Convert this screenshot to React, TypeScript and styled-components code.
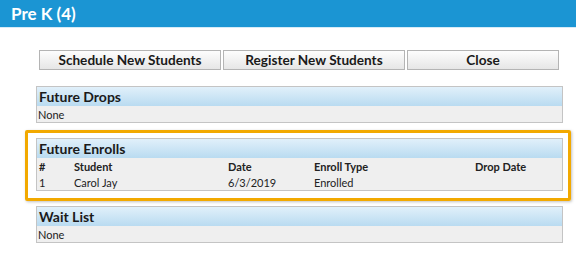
import React from "react";
import styled, { createGlobalStyle } from "styled-components";

const GlobalStyle = createGlobalStyle`
  body {
    margin: 0;
    background: #ffffff;
    font-family: Lato, "Open Sans", Arial, sans-serif;
    color: #222;
  }
`;

const Page = styled.div`
  width: 576px;
  height: 253px;
  overflow: hidden;
  background: #fff;
`;

const TitleBar = styled.div`
  height: 28px;
  background: #1b95d3;
  border-bottom: 1px solid #d6ebf7;
  box-sizing: border-box;
  display: flex;
  align-items: center;
  padding-left: 11px;
  color: #fff;
  font-weight: 700;
  font-size: 17px;
`;

const Content = styled.div`
  display: flex;
  flex-direction: column;
  padding-top: 22px;
`;

const ButtonRow = styled.div`
  display: flex;
  gap: 2px;
  margin-left: 39px;
  margin-bottom: 16px;
`;

const Button = styled.button<{ $w: number }>`
  width: ${(p) => p.$w}px;
  height: 20px;
  box-sizing: border-box;
  border: 1px solid #b4b4b4;
  background: linear-gradient(#fdfdfd, #e6e6e6);
  font-family: Lato, Arial, sans-serif;
  font-weight: 700;
  font-size: 13.6px;
  color: #1a1a1a;
  padding: 0;
  cursor: pointer;
`;

const Panel = styled.section`
  width: 527px;
  margin-left: 36px;
  box-sizing: border-box;
  border: 1px solid #c4c4c4;
  background: #efefef;
`;

const PanelHeader = styled.div`
  height: 19px;
  display: flex;
  align-items: center;
  padding-left: 2px;
  background: linear-gradient(#e1f0fa, #b9dbf1);
  font-weight: 700;
  font-size: 14px;
  color: #1a1a1a;
`;

const BodyRow = styled.div`
  height: 16px;
  display: flex;
  align-items: center;
  padding-left: 1px;
  font-size: 11px;
  color: #222;
`;

const Highlight = styled.div<{ $top: number; $bottom: number }>`
  width: 546px;
  margin-left: 25px;
  margin-top: ${(p) => p.$top}px;
  margin-bottom: ${(p) => p.$bottom}px;
  box-sizing: border-box;
  border: 3px solid #f2a900;
  border-radius: 2px;
  box-shadow: 1px 1px 3px rgba(0, 0, 0, 0.25);
  padding: 5px 0 7px 8px;

  ${Panel} {
    margin-left: 0;
  }
`;

const TableRow = styled.div<{ $head?: boolean }>`
  display: grid;
  grid-template-columns: 35px 154px 86px 161px 1fr;
  padding-left: 2px;
  height: 16px;
  align-items: center;
  font-size: 11px;
  font-weight: ${(p) => (p.$head ? 700 : 400)};
  color: #222;
`;

const columns = ["#", "Student", "Date", "Enroll Type", "Drop Date"];
const enrolls = [{ n: "1", student: "Carol Jay", date: "6/3/2019", type: "Enrolled", drop: "" }];

export default function App() {
  return (
    <Page>
      <GlobalStyle />
      <TitleBar>Pre K (4)</TitleBar>
      <Content>
        <ButtonRow>
          <Button $w={182}>Schedule New Students</Button>
          <Button $w={182}>Register New Students</Button>
          <Button $w={152}>Close</Button>
        </ButtonRow>

        <Panel>
          <PanelHeader>Future Drops</PanelHeader>
          <BodyRow>None</BodyRow>
        </Panel>

        <Highlight $top={7} $bottom={5}>
          <Panel>
            <PanelHeader>Future Enrolls</PanelHeader>
            <TableRow $head>
              {columns.map((c) => (
                <span key={c}>{c}</span>
              ))}
            </TableRow>
            {enrolls.map((e) => (
              <TableRow key={e.n}>
                <span>{e.n}</span>
                <span>{e.student}</span>
                <span>{e.date}</span>
                <span>{e.type}</span>
                <span>{e.drop}</span>
              </TableRow>
            ))}
          </Panel>
        </Highlight>

        <Panel>
          <PanelHeader>Wait List</PanelHeader>
          <BodyRow>None</BodyRow>
        </Panel>
      </Content>
    </Page>
  );
}
